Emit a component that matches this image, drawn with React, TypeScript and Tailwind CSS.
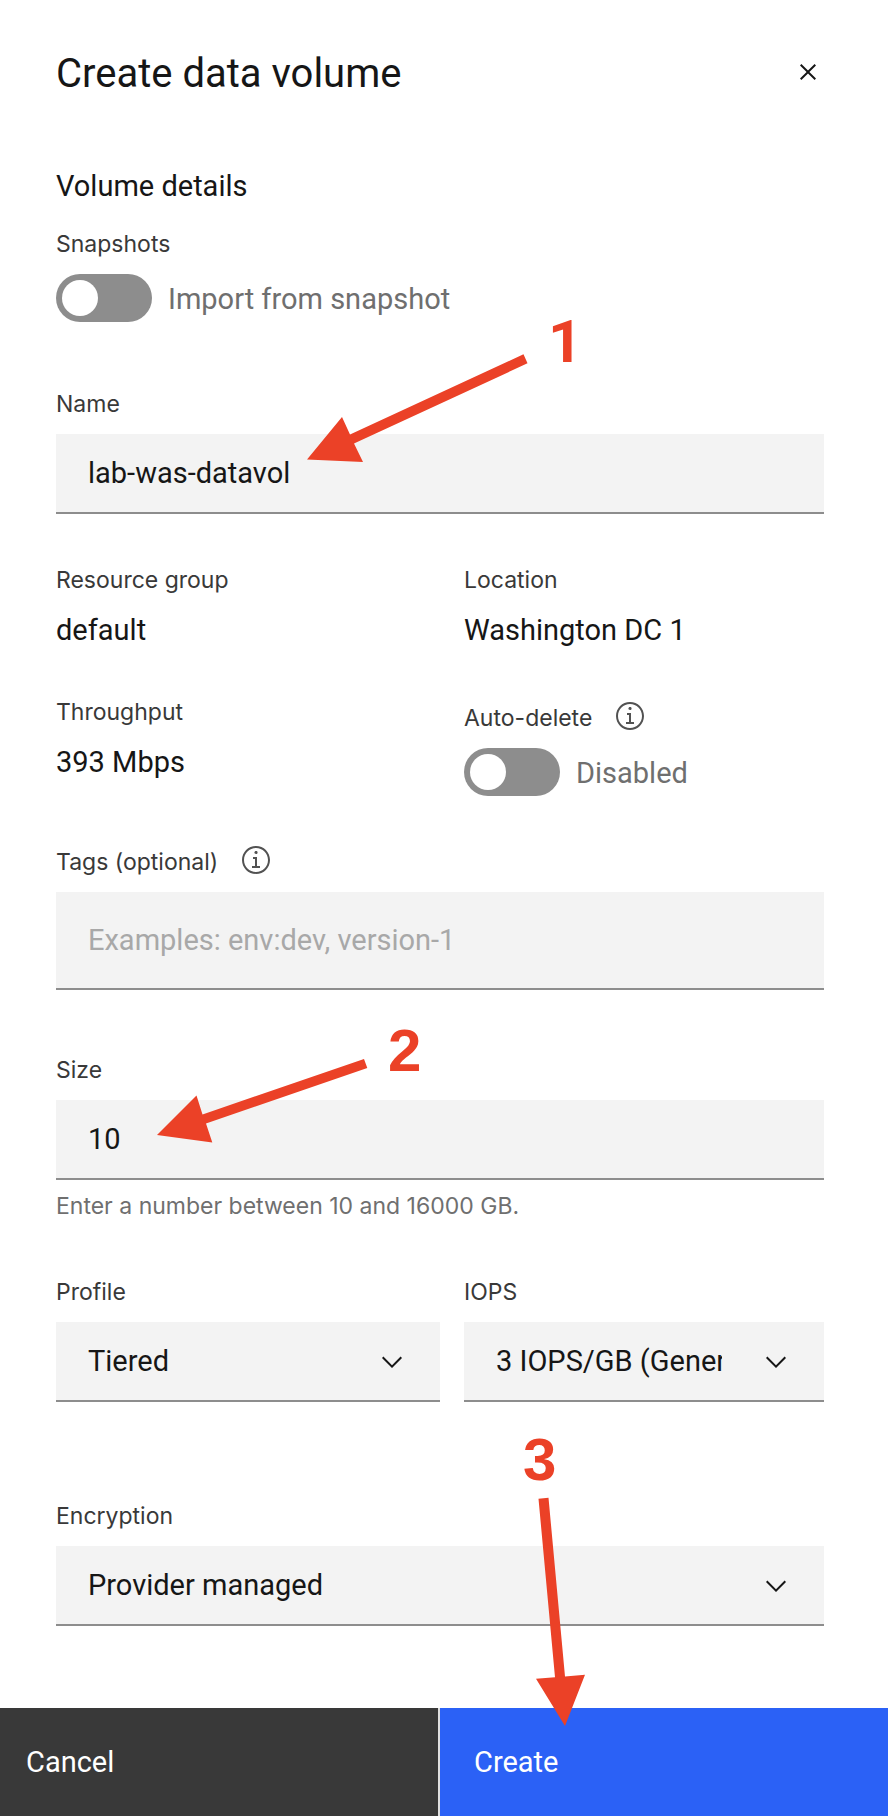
import { useState, type ReactNode } from "react";

const labelClass = "font-['Inter',sans-serif] text-[23px] leading-8 text-[#393939]";
const valueClass = "text-[29px] leading-10 text-[#161616]";
const fieldClass =
  "block w-full rounded-none border-b-2 border-[#8d8d8d] bg-[#f3f3f3] px-8 text-[29px] leading-10 text-[#161616] outline-none placeholder:text-[#a8a8a8] placeholder:opacity-100";

function CloseIcon() {
  return (
    <svg viewBox="0 0 16 16" className="size-8 fill-[#161616]" aria-hidden="true">
      <path d="M12 4.7 11.3 4 8 7.3 4.7 4 4 4.7 7.3 8 4 11.3 4.7 12 8 8.7 11.3 12 12 11.3 8.7 8z" />
    </svg>
  );
}

function InfoButton({ label }: { label: string }) {
  return (
    <button type="button" aria-label={label} className="-mt-1 block size-8">
      <svg viewBox="0 0 16 16" className="size-8 fill-[#525252]" aria-hidden="true">
        <path d="M8.5 11V6.5h-2v1h1V11H6v1h4v-1zM8 3.5c-.4 0-.8.3-.8.8S7.6 5 8 5s.8-.3.8-.8-.4-.7-.8-.7z" />
        <path d="M8 15c-3.9 0-7-3.1-7-7s3.1-7 7-7 7 3.1 7 7-3.1 7-7 7zM8 2C4.7 2 2 4.7 2 8s2.7 6 6 6 6-2.7 6-6-2.7-6-6-6z" />
      </svg>
    </button>
  );
}

function Toggle({ id, text }: { id: string; text: string }) {
  return (
    <div className="mt-3.5 flex items-center gap-4">
      <input
        id={id}
        type="checkbox"
        role="switch"
        className="h-12 w-24 shrink-0 appearance-none rounded-full bg-[#8d8d8d] p-1.5 before:block before:size-9 before:rounded-full before:bg-white checked:bg-[#198038] checked:before:translate-x-12"
      />
      <label htmlFor={id} className="pt-0.5 text-[29px] leading-10 text-[#6f6f6f]">
        {text}
      </label>
    </div>
  );
}

function SelectField({ id, label, options }: { id: string; label: string; options: string[] }) {
  return (
    <div className="min-w-0">
      <label htmlFor={id} className={`block ${labelClass}`}>
        {label}
      </label>
      <div className="relative mt-3.5">
        <select id={id} className={`h-20 appearance-none pr-[102px]! ${fieldClass}`}>
          {options.map((option) => (
            <option key={option}>{option}</option>
          ))}
        </select>
        <svg
          viewBox="0 0 16 16"
          className="pointer-events-none absolute top-6 right-8 size-8 fill-[#161616]"
          aria-hidden="true"
        >
          <path d="M8 11 3 6l.7-.7L8 9.6l4.3-4.3.7.7z" />
        </svg>
      </div>
    </div>
  );
}

function Fact({ label, children }: { label: string; children: ReactNode }) {
  return (
    <div>
      <div className={labelClass}>{label}</div>
      <div className={`mt-3.5 ${valueClass}`}>{children}</div>
    </div>
  );
}

/* Numbered step markers drawn over the form. */
function StepMarkers() {
  return (
    <svg
      width="888"
      height="1816"
      viewBox="0 0 888 1816"
      className="pointer-events-none absolute top-0 left-0 fill-[#eb4127] text-[60px] font-bold"
    >
      <path d="M307 459.5 342 417l8 17.5 173.5-80.2 4 9L354 443.5l9 18.5z" />
      <path d="m157 1135 39.5-39.5 6 19L364 1059l3.3 9-161.3 55.5 6.3 19z" />
      <path d="m565 1726-29-47.3 19-1.5-16.5-178.4 10-1 16.5 178.6 20-1.6z" />
      <text x="548" y="362" className="font-['Roboto',sans-serif]">
        1
      </text>
      <text x="388" y="1071" className="font-['Liberation_Sans',sans-serif]">
        2
      </text>
      <text x="523" y="1480" className="font-['Liberation_Sans',sans-serif]">
        3
      </text>
    </svg>
  );
}

export default function App() {
  const [name, setName] = useState("lab-was-datavol");
  const [size, setSize] = useState("10");

  return (
    <form
      className="relative bg-white font-['Roboto',sans-serif] text-[#161616]"
      onSubmit={(event) => event.preventDefault()}
    >
      <div className="pt-12 pr-16 pl-14">
        <header className="flex items-start justify-between">
          <h1 className="text-[40px] leading-[52px]">Create data volume</h1>
          <button type="button" aria-label="Close" className="mt-2">
            <CloseIcon />
          </button>
        </header>

        <h2 className="mt-[66px] text-[29px] leading-10">Volume details</h2>

        <div className={`mt-[22px] ${labelClass}`}>Snapshots</div>
        <Toggle id="snapshots" text="Import from snapshot" />

        <div className="mt-[66px]">
          <label htmlFor="name" className={`block ${labelClass}`}>
            Name
          </label>
          <input
            id="name"
            type="text"
            value={name}
            onChange={(event) => setName(event.target.value)}
            className={`mt-3.5 h-20 ${fieldClass}`}
          />
        </div>

        <div className="mt-[50px] grid grid-cols-[16fr_15fr] gap-x-6 gap-y-[46px]">
          <Fact label="Resource group">default</Fact>
          <Fact label="Location">Washington DC 1</Fact>
          <Fact label="Throughput">393 Mbps</Fact>
          <div className="pt-1.5">
            <div className="flex items-center gap-[22px]">
              <span className={labelClass}>Auto-delete</span>
              <InfoButton label="About auto-delete" />
            </div>
            <Toggle id="auto-delete" text="Disabled" />
          </div>
        </div>

        <div className="mt-[50px]">
          <div className="flex items-center gap-[22px]">
            <label htmlFor="tags" className={labelClass}>
              Tags (optional)
            </label>
            <InfoButton label="About tags" />
          </div>
          <input
            id="tags"
            type="text"
            placeholder="Examples: env:dev, version-1"
            className={`mt-3.5 h-[98px] ${fieldClass}`}
          />
        </div>

        <div className="mt-16">
          <label htmlFor="size" className={`block ${labelClass}`}>
            Size
          </label>
          <input
            id="size"
            type="text"
            inputMode="numeric"
            aria-describedby="size-help"
            value={size}
            onChange={(event) => setSize(event.target.value)}
            className={`mt-3.5 h-20 ${fieldClass}`}
          />
          <p
            id="size-help"
            className="mt-2.5 font-['Inter',sans-serif] text-[23px] leading-8 text-[#6f6f6f]"
          >
            Enter a number between 10 and 16000 GB.
          </p>
        </div>

        <div className="mt-[54px] grid grid-cols-[16fr_15fr] gap-x-6">
          <SelectField id="profile" label="Profile" options={["Tiered", "Custom"]} />
          <SelectField id="iops" label="IOPS" options={["3 IOPS/GB (General purpose)"]} />
        </div>

        <div className="mt-[98px]">
          <SelectField id="encryption" label="Encryption" options={["Provider managed"]} />
        </div>
      </div>

      <footer className="mt-[82px] grid grid-cols-[55fr_56fr] text-[29px] leading-10 text-white">
        <button
          type="button"
          className="h-[108px] border-r-2 border-[#e0e0e0] bg-[#393939] px-[26px] text-left"
        >
          Cancel
        </button>
        <button type="submit" className="h-[108px] bg-[#2b61f6] px-[34px] text-left">
          Create
        </button>
      </footer>

      <StepMarkers />
    </form>
  );
}
